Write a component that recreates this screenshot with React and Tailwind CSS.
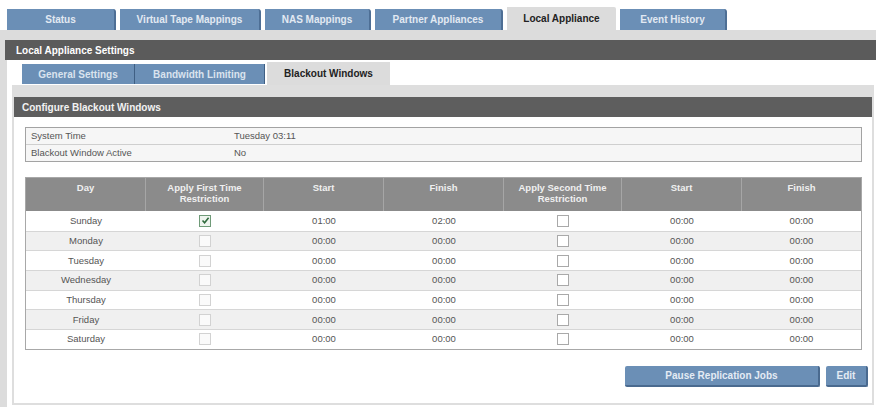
import React from "react";

const topTabs = [
  { label: "Status", w: "w-[109px]" },
  { label: "Virtual Tape Mappings", w: "w-[141px]" },
  { label: "NAS Mappings", w: "w-[106px]" },
  { label: "Partner Appliances", w: "w-[128px]" },
  { label: "Local Appliance", w: "w-[109px]", active: true },
  { label: "Event History", w: "w-[107px]" },
];

const subTabs = [
  { label: "General Settings", w: "w-[113px]" },
  { label: "Bandwidth Limiting", w: "w-[130px]" },
  { label: "Blackout Windows", w: "w-[123px]", active: true },
];

const rows = [
  { day: "Sunday", c1: true, s1: "01:00", f1: "02:00" },
  { day: "Monday" },
  { day: "Tuesday" },
  { day: "Wednesday" },
  { day: "Thursday" },
  { day: "Friday" },
  { day: "Saturday" },
];

function Box({ checked, faint }) {
  if (checked) {
    return (
      <span className="inline-flex w-[12px] h-[12px] border border-[#6f9a78] bg-[#eef4ee] items-center justify-center">
        <svg width="9" height="9" viewBox="0 0 9 9">
          <path d="M1.5 4.5 L3.6 6.8 L7.6 1.8" fill="none" stroke="#2f6a3c" strokeWidth="1.6" />
        </svg>
      </span>
    );
  }
  return (
    <span
      className={
        "inline-block w-[12px] h-[12px] border " +
        (faint ? "border-[#d2d2d2] bg-[#fafafa]" : "border-[#a9a9a9] bg-white")
      }
    />
  );
}

export default function App() {
  return (
    <div className="w-[876px] h-[407px] bg-white overflow-hidden font-['Liberation_Sans',Arial,sans-serif] text-[#444]">
      {/* top tabs */}
      <div className="flex items-end gap-[4px] pl-[7px] h-[30px]">
        {topTabs.map((t) =>
          t.active ? (
            <div
              key={t.label}
              className={`${t.w} h-[23px] bg-[#dcdcdc] flex items-center justify-center text-[10px] font-bold text-[#222] rounded-tr-[2px]`}
            >
              {t.label}
            </div>
          ) : (
            <div
              key={t.label}
              className={`${t.w} h-[21px] bg-[#6b8fb6] border-r-2 border-[#4e6f95] flex items-center justify-center text-[10px] font-bold text-[#e2e9f2] rounded-tr-[3px]`}
            >
              {t.label}
            </div>
          )
        )}
      </div>

      {/* outer panel */}
      <div className="bg-[#dcdcdc] pt-[10px] pl-[5px] h-[377px] flex flex-col">
        <div className="h-[20px] bg-[#5b5b5b] text-white font-bold text-[10px] pl-[11px] flex items-center">
          Local Appliance Settings
        </div>
        <div className="flex-1 bg-white ml-[2px] pl-[5px] pr-[2px] flex flex-col">
          {/* sub tabs */}
          <div className="flex items-start h-[25px] ml-[10px] pt-[2px]">
            {subTabs.map((t) =>
              t.active ? (
                <div
                  key={t.label}
                  className={`${t.w} h-[23px] ml-[2px] bg-[#dcdcdc] flex items-center justify-center text-[10px] font-bold text-[#222]`}
                >
                  {t.label}
                </div>
              ) : (
                <div
                  key={t.label}
                  className={`${t.w} h-[20px] mt-[2px] bg-[#6b8fb6] border-r border-[#3f5f84] flex items-center justify-center text-[10px] font-bold text-[#dae3ee]`}
                >
                  {t.label}
                </div>
              )
            )}
          </div>

          {/* inner panel */}
          <div className="bg-[#dedede] pt-[12px] px-[2px] pb-[2px] h-[320px] flex flex-col">
            <div className="h-[20px] bg-[#5e5e5e] text-[#f2f2f2] font-bold text-[10px] pl-[8px] flex items-center">
              Configure Blackout Windows
            </div>
            <div className="flex-1 bg-white pl-[11px] pr-[10px] pt-[10px] flex flex-col">
              {/* info table */}
              <div className="border border-[#a3a3a3] bg-[#f6f6f6] text-[9.5px] text-[#555]">
                <div className="h-[17px] flex items-center border-b border-[#cfcfcf]">
                  <div className="w-[208px] pl-[5px]">System Time</div>
                  <div>Tuesday 03:11</div>
                </div>
                <div className="h-[16px] flex items-center">
                  <div className="w-[208px] pl-[5px]">Blackout Window Active</div>
                  <div>No</div>
                </div>
              </div>

              {/* main table */}
              <div className="mt-[15px] border border-[#a8a8a8] text-[9.5px]">
                <div className="grid grid-cols-[120px_118px_120px_120px_118px_120px_1fr] h-[33px] bg-[#8b8b8b] text-[#f0f0f0] font-bold text-center leading-[11px]">
                  <div className="flex items-start justify-center pt-[4px] border-r border-[#a6a6a6]">Day</div>
                  <div className="flex items-start justify-center pt-[4px] border-r border-[#a6a6a6]">
                    Apply First Time
                    <br />
                    Restriction
                  </div>
                  <div className="flex items-start justify-center pt-[4px] border-r border-[#a6a6a6]">Start</div>
                  <div className="flex items-start justify-center pt-[4px] border-r border-[#a6a6a6]">Finish</div>
                  <div className="flex items-start justify-center pt-[4px] border-r border-[#a6a6a6]">
                    Apply Second Time
                    <br />
                    Restriction
                  </div>
                  <div className="flex items-start justify-center pt-[4px] border-r border-[#a6a6a6]">Start</div>
                  <div className="flex items-start justify-center pt-[4px]">Finish</div>
                </div>
                {rows.map((r, i) => (
                  <div
                    key={r.day}
                    className={
                      "grid grid-cols-[120px_118px_120px_120px_118px_120px_1fr] h-[19.7px] items-center text-center text-[#555] " +
                      (i > 0 ? "border-t border-[#d6d6d6] " : "") +
                      (i % 2 === 1 ? "bg-[#f0f0f0]" : "bg-white")
                    }
                  >
                    <div>{r.day}</div>
                    <div className="flex justify-center">
                      <Box checked={r.c1} faint />
                    </div>
                    <div>{r.s1 || "00:00"}</div>
                    <div>{r.f1 || "00:00"}</div>
                    <div className="flex justify-center">
                      <Box />
                    </div>
                    <div>00:00</div>
                    <div>00:00</div>
                  </div>
                ))}
              </div>

              {/* buttons */}
              <div className="flex justify-end gap-[6px] mt-[16px] mr-[-6px]">
                <button className="w-[195px] h-[21px] bg-[#6b8fb6] border-r-2 border-b-2 border-[#4a6a8f] rounded-[2px] text-[10px] font-bold text-[#e4ebf4]">
                  Pause Replication Jobs
                </button>
                <button className="w-[42px] h-[21px] bg-[#6b8fb6] border-r-2 border-b-2 border-[#4a6a8f] rounded-[2px] text-[10px] font-bold text-[#e4ebf4]">
                  Edit
                </button>
              </div>
            </div>
          </div>
        </div>
      </div>
    </div>
  );
}
